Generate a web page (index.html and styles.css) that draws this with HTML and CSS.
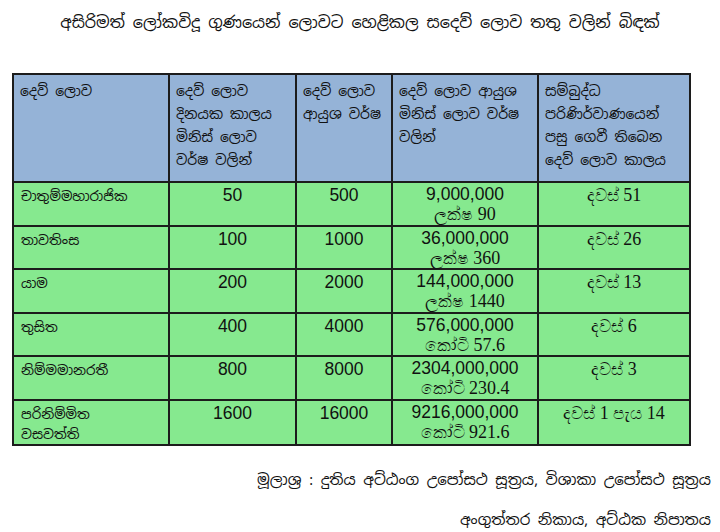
FILE: index.html
```html
<!DOCTYPE html>
<html lang="si">
<head>
<meta charset="utf-8">
<title>දෙව් ලොව</title>
<link rel="stylesheet" href="styles.css">
</head>
<body>
<h1 class="title">අසිරිමත් ලෝකවිදූ ගුණයෙන් ලොවට හෙළිකල සදෙව් ලොව තතු වලින් බිඳක්</h1>
<table class="grid">
  <colgroup>
    <col class="c1"><col class="c2"><col class="c3"><col class="c4"><col class="c5">
  </colgroup>
  <thead>
    <tr class="head">
      <th>දෙව් ලොව</th>
      <th>දෙව් ලොව<br>දිනයක කාලය<br>මිනිස් ලොව<br>වර්ෂ වලින්</th>
      <th>දෙව් ලොව<br>ආයුශ වර්ෂ</th>
      <th>දෙව් ලොව ආයුශ<br>මිනිස් ලොව වර්ෂ<br>වලින්</th>
      <th>සම්බුද්ධ<br>පරිණිර්වාණයෙන්<br>පසු ගෙවී තිබෙන<br>දෙව් ලොව කාලය</th>
    </tr>
  </thead>
  <tbody>
    <tr>
      <td class="name">චාතුම්මහාරාජික</td><td class="num">50</td><td class="num">500</td>
      <td class="life"><span class="big">9,000,000</span><span class="sub"><span class="si">ලක්ෂ</span> 90</span></td>
      <td class="days"><span class="si">දවස්</span> 51</td>
    </tr>
    <tr>
      <td class="name">තාවතිංස</td><td class="num">100</td><td class="num">1000</td>
      <td class="life"><span class="big">36,000,000</span><span class="sub"><span class="si">ලක්ෂ</span> 360</span></td>
      <td class="days"><span class="si">දවස්</span> 26</td>
    </tr>
    <tr>
      <td class="name">යාම</td><td class="num">200</td><td class="num">2000</td>
      <td class="life"><span class="big">144,000,000</span><span class="sub"><span class="si">ලක්ෂ</span> 1440</span></td>
      <td class="days"><span class="si">දවස්</span> 13</td>
    </tr>
    <tr>
      <td class="name">තුසිත</td><td class="num">400</td><td class="num">4000</td>
      <td class="life"><span class="big">576,000,000</span><span class="sub"><span class="si">කෝටි</span> 57.6</span></td>
      <td class="days"><span class="si">දවස්</span> 6</td>
    </tr>
    <tr>
      <td class="name">නිම්මමානරතී</td><td class="num">800</td><td class="num">8000</td>
      <td class="life"><span class="big">2304,000,000</span><span class="sub"><span class="si">කෝටි</span> 230.4</span></td>
      <td class="days"><span class="si">දවස්</span> 3</td>
    </tr>
    <tr>
      <td class="name">පරිනිම්මිත<br>වසවත්ති</td><td class="num">1600</td><td class="num">16000</td>
      <td class="life"><span class="big">9216,000,000</span><span class="sub"><span class="si">කෝටි</span> 921.6</span></td>
      <td class="days"><span class="si">දවස්</span> 1 <span class="si">පැය</span> 14</td>
    </tr>
  </tbody>
</table>
<div class="source">
  <p class="src-line">මූලාශ්‍ර : දුතිය අට්ඨංග උපෝසථ සූත්‍රය, විශාකා උපෝසථ සූත්‍රය</p>
  <p class="src-line">අංගුත්තර නිකාය, අට්ඨක නිපාතය</p>
</div>
</body>
</html>
```

FILE: styles.css
```css
html, body {
  margin: 0;
  padding: 0;
  background: #ffffff;
}
body {
  width: 720px;
  height: 532px;
  overflow: hidden;
  color: #111111;
  font-family: "Noto Sans Sinhala", "Iskoola Pota", "Liberation Sans", sans-serif;
}
.title {
  margin: 0;
  padding-top: 12px;
  height: 73px;
  box-sizing: border-box;
  font-size: 16px;
  font-weight: normal;
  text-align: center;
  line-height: 22px;
}
.grid {
  margin-left: 12px;
  width: 677px;
  border-collapse: collapse;
  table-layout: fixed;
}
.c1 { width: 156px; }
.c2 { width: 127px; }
.c3 { width: 96px; }
.c4 { width: 146px; }
.c5 { width: 152px; }
.grid th, .grid td {
  border: 2px solid #1c1c1c;
  vertical-align: top;
  padding: 0;
}
.grid .head {
  height: 108px;
}
.grid .head th {
  background: #95b3d7;
  padding: 5px 6px 0;
  text-align: left;
  font-weight: normal;
  font-size: 14px;
  line-height: 23px;
}
.grid tbody tr {
  height: 43.6px;
}
.grid tbody td {
  background: #86e98f;
}
.grid .name {
  padding: 3px 7px 0;
  font-size: 13.5px;
  line-height: 20px;
}
.grid .num {
  text-align: center;
  padding-top: 2px;
  font-family: "Liberation Sans", sans-serif;
  font-size: 17.5px;
  line-height: 21px;
}
.grid .life {
  text-align: center;
  padding-top: 1px;
}
.big {
  display: block;
  font-family: "Liberation Sans", sans-serif;
  font-size: 17.5px;
  line-height: 20px;
}
.sub {
  display: block;
  font-family: "Liberation Serif", serif;
  font-size: 18px;
  line-height: 20px;
}
.si {
  font-size: 16.5px;
  line-height: 10px;
}
.grid .days {
  text-align: center;
  padding-top: 2px;
  font-family: "Liberation Serif", serif;
  font-size: 18px;
  line-height: 20px;
}
.source {
  padding-right: 9px;
  padding-top: 23px;
  text-align: right;
}
.src-line {
  margin: 0 0 18px;
  font-size: 15px;
  line-height: 22px;
}
```
